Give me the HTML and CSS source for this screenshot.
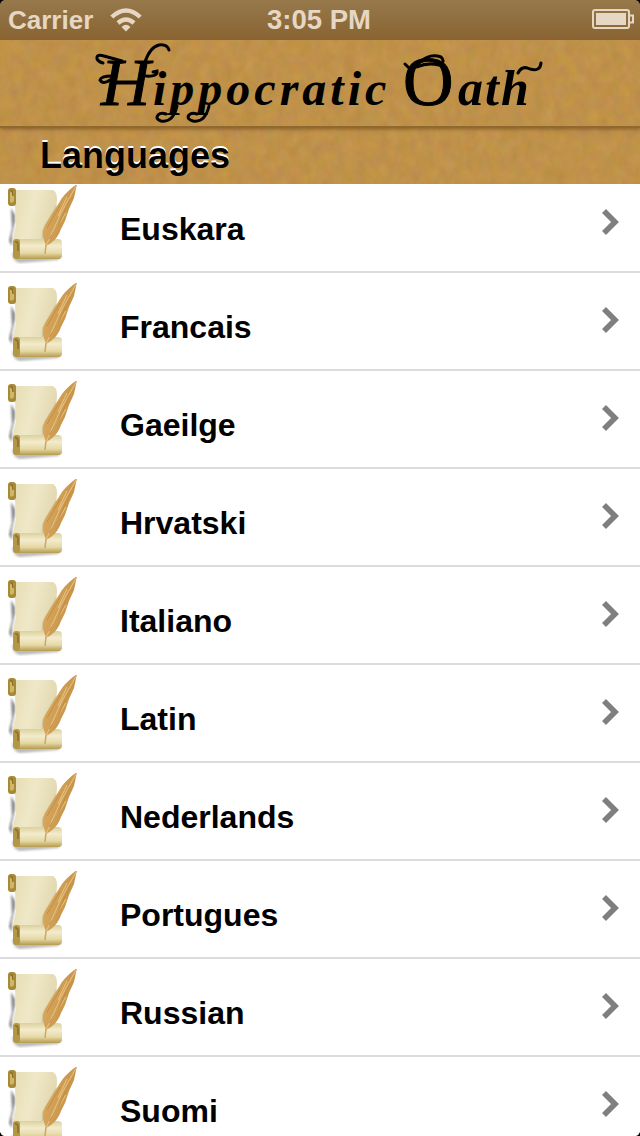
FILE: index.html
```html
<!DOCTYPE html>
<html lang="en">
<head>
  <meta charset="UTF-8">
  <meta name="viewport" content="width=device-width, initial-scale=1.0">
  <title>Hippocratic Oath</title>
  <link rel="stylesheet" href="styles.css">
</head>
<body>
  <!-- shared icons -->
  <svg class="defs" width="0" height="0">
    <defs>
      <linearGradient id="paper" x1="0" x2="1" y1="0" y2="0.3">
        <stop offset="0" stop-color="#e6dcb2"/>
        <stop offset="0.5" stop-color="#efe8c8"/>
        <stop offset="1" stop-color="#e2d8b0"/>
      </linearGradient>
      <linearGradient id="roll" x1="0" x2="0" y1="0" y2="1">
        <stop offset="0" stop-color="#ddd09a"/>
        <stop offset="0.35" stop-color="#f3ecce"/>
        <stop offset="0.7" stop-color="#e5d9a4"/>
        <stop offset="1" stop-color="#b59b50"/>
      </linearGradient>
      <linearGradient id="feather" x1="0" x2="1" y1="0" y2="0.5">
        <stop offset="0" stop-color="#dcb26c"/>
        <stop offset="0.5" stop-color="#d2a055"/>
        <stop offset="1" stop-color="#c08c40"/>
      </linearGradient>
      <filter id="soft"><feGaussianBlur stdDeviation="1.3"/></filter>
      <filter id="grain" x="0" y="0" width="100%" height="100%" color-interpolation-filters="sRGB">
        <feTurbulence type="fractalNoise" baseFrequency="0.09 0.07" numOctaves="4" seed="8"/>
        <feColorMatrix values="0.08 0 0 0 0.71  0.04 0.06 0 0 0.52  0 0 0.1 0 0.24  0 0 0 0 1"/>
      </filter>
      <symbol id="scroll" viewBox="0 0 80 84">
        <path d="M11 23L15 30L15 36L12 50L12 61L9 56L12 43Z" fill="#68676b" opacity=".8" filter="url(#soft)"/>
        <path d="M12 68Q13 77 20 78L58 75L62 71Z" fill="#777" opacity=".5" filter="url(#soft)"/>
        <path d="M14 5L53 5Q57 7 57 14L56 32L51 62L15 62L13 53L16 40L15 22Z" fill="url(#paper)"/>
        <path d="M56 20L42 45L41 60L51 60Z" fill="#c5bb91" opacity=".5"/>
        <rect x="8" y="3" width="8" height="18" rx="3" fill="#a88936"/>
        <path d="M10 6Q14 5 14 10L14 16Q12 19 10 17Z" fill="#cdb76b"/>
        <path d="M10 6Q13 5 13 11" fill="none" stroke="#8a6d28" stroke-width="1.5"/>
        <rect x="15" y="54" width="47" height="20" rx="4" fill="url(#roll)"/>
        <rect x="13" y="54" width="7" height="20" rx="3" fill="#b39745"/>
        <path d="M15 57Q18 56 18 61V66" fill="none" stroke="#8c6d2a" stroke-width="1.5"/>
        <path d="M77 -1C73 2 66 7 62 13L45 40Q42 46 43 52L46 61L51 58Q58 53 61 44L65 36L69 24L74 13Z" fill="url(#feather)"/>
        <path d="M76 1L61 28L46 61M67 12L58 31M66 28L52 50" fill="none" stroke="#e3bd7c" stroke-width="1.200"/>
        <path d="M70 14L58 41L49 54M60 20L47 43" fill="none" stroke="#c08e45" stroke-width="1"/>
        <path d="M46 60L45 69" stroke="#cba768" stroke-width="1.500"/>
      </symbol>
      <symbol id="chevron" viewBox="0 0 18 26">
        <path d="M2 2L13 13L2 24" fill="none" stroke="#7f7f7f" stroke-width="5.600"/>
      </symbol>
    </defs>
  </svg>

  <div class="phone">
    <div class="status-bar">
      <div class="carrier">
        <span>Carrier</span>
        <svg class="wifi" width="32" height="24" viewBox="0 0 32 24">
          <path d="M1.800 9Q16 -4 30.200 9M8 15Q16 8 24 15" fill="none" stroke="#e5d7c4" stroke-width="4.400"/>
          <path d="M11.500 19Q16 14.500 20.500 19L16 23.500Z" fill="#e5d7c4"/>
        </svg>
      </div>
      <span class="time">3:05 PM</span>
      <svg class="battery" width="42" height="21" viewBox="0 0 42 21">
        <rect x="1" y="1" width="36" height="18" rx="2" fill="none" stroke="#e5d7c4" stroke-width="2"/>
        <rect x="4" y="4" width="30" height="12" fill="#e5d7c4"/>
        <path d="M38 6.500H41V13.500H38" fill="none" stroke="#e5d7c4" stroke-width="2"/>
      </svg>
    </div>

    <div class="header">
      <svg class="texture" width="640" height="144"><rect width="640" height="144" filter="url(#grain)"/></svg>
      <div class="title-bar">
        <svg class="title" width="640" height="86" viewBox="0 0 640 86">
          <text y="65"><tspan class="cap" x="101">H</tspan><tspan class="run" x="153">ippocratic</tspan> <tspan class="cap round" x="403">O</tspan><tspan class="end" x="458">ath</tspan></text>
          <!-- pen flourishes around the letters -->
          <g class="flourish">
            <path d="M103 23Q96 21 97 17Q98 14 104 16L122 21M112 36Q101 36 100 40Q103 45 110 40M146 36Q158 37 157 31L153 32M145 22Q150 7 159 5Q167 4 169 10"/>
            <path d="M177 66Q173 83 161 81Q155 79 158 75Q161 72 166 74M209 66Q205 83 193 81Q186 79 189 75Q192 72 197 74"/>
            <path d="M405 24L409 28Q417 27 420 22Q430 13 441 17Q446 22 439 25Q428 22 417 27M518 33Q522 25 530 29Q540 32 541 23"/>
          </g>
        </svg>
      </div>
      <h1 class="section-title">Languages</h1>
    </div>

    <div class="list">
      <ul class="languages">
        <li><svg class="scroll"><use href="#scroll"/></svg><span>Euskara</span><svg class="chevron"><use href="#chevron"/></svg></li>
        <li><svg class="scroll"><use href="#scroll"/></svg><span>Francais</span><svg class="chevron"><use href="#chevron"/></svg></li>
        <li><svg class="scroll"><use href="#scroll"/></svg><span>Gaeilge</span><svg class="chevron"><use href="#chevron"/></svg></li>
        <li><svg class="scroll"><use href="#scroll"/></svg><span>Hrvatski</span><svg class="chevron"><use href="#chevron"/></svg></li>
        <li><svg class="scroll"><use href="#scroll"/></svg><span>Italiano</span><svg class="chevron"><use href="#chevron"/></svg></li>
        <li><svg class="scroll"><use href="#scroll"/></svg><span>Latin</span><svg class="chevron"><use href="#chevron"/></svg></li>
        <li><svg class="scroll"><use href="#scroll"/></svg><span>Nederlands</span><svg class="chevron"><use href="#chevron"/></svg></li>
        <li><svg class="scroll"><use href="#scroll"/></svg><span>Portugues</span><svg class="chevron"><use href="#chevron"/></svg></li>
        <li><svg class="scroll"><use href="#scroll"/></svg><span>Russian</span><svg class="chevron"><use href="#chevron"/></svg></li>
        <li><svg class="scroll"><use href="#scroll"/></svg><span>Suomi</span><svg class="chevron"><use href="#chevron"/></svg></li>
      </ul>
    </div>

    <!-- rounded screen corners -->
    <svg class="corners" width="640" height="1136" viewBox="0 0 640 1136">
      <path d="M0 0H4Q1 1 0 4ZM640 0H636Q639 1 640 4ZM0 1136H4Q1 1135 0 1132ZM640 1136H636Q639 1135 640 1132Z"/>
    </svg>
  </div>
</body>
</html>
```
FILE: styles.css
```css
body {
    margin: 0;
    font-family: "Liberation Sans", Arial, sans-serif;
    font-weight: bold;
    background-color: #ffffff;
    overflow: hidden;
}

.defs {
    position: absolute;
}

.phone {
    position: relative;
    display: flex;
    flex-direction: column;
    width: 640px;
    height: 1136px;
    overflow: hidden;
}

.status-bar {
    display: grid;
    grid-template-columns: 1fr auto 1fr;
    align-items: center;
    height: 40px;
    padding: 0 6px 0 8px;
    box-sizing: border-box;
    flex-shrink: 0;
    color: #e5d7c4;
    background: linear-gradient(#97794c, #8f6e3e 50%, #8a6332);
    font-size: 27.5px;
    line-height: 40px;
}

.time {
    margin-right: 4px;
}

.carrier {
    display: flex;
    align-items: center;
    gap: 17px;
    font-size: 26px;
}

.battery {
    justify-self: end;
    margin-top: -1px;
}

.header {
    position: relative;
    height: 144px;
    flex-shrink: 0;
    overflow: hidden;
    background-color: #be9048;
}

.texture {
    position: absolute;
    top: 0;
    left: 0;
}

.title-bar {
    position: relative;
    height: 86px;
    border-bottom: 2px solid #91692f;
    box-shadow: 0 1px 4px rgba(90, 55, 15, 0.6);
}

.title {
    display: block;
    font-family: "Liberation Serif", "Times New Roman", serif;
    font-style: italic;
    font-weight: bold;
}

.cap {
    font-size: 68px;
    font-weight: normal;
    stroke: #000000;
    stroke-width: 1px;
}

.round {
    font-size: 70px;
    font-style: normal;
}

.run {
    font-size: 48px;
    letter-spacing: 4px;
}

.end {
    font-size: 50px;
    letter-spacing: 2px;
}

.flourish {
    fill: none;
    stroke: #000000;
    stroke-width: 3px;
    stroke-linecap: round;
}

.section-title {
    position: relative;
    margin: 0;
    padding: 1px 0 0 40px;
    font-size: 36px;
    line-height: 54px;
    color: #000000;
    text-shadow: 0 -2px 0 #ffffff;
}

.list {
    flex: 1;
    min-height: 0;
    overflow: hidden;
}

/* list is scrolled a little under the section header */
.languages {
    list-style: none;
    margin: -9px 0 0;
    padding: 0;
}

.languages li {
    display: flex;
    align-items: flex-start;
    height: 98px;
    box-sizing: border-box;
    border-bottom: 2px solid #dcdce0;
    font-size: 32px;
}

.scroll {
    width: 80px;
    height: 84px;
    margin-top: 10px;
}

.languages span {
    flex: 1;
    margin-left: 40px;
    padding-top: 36px;
    line-height: 36px;
}

.chevron {
    width: 18px;
    height: 26px;
    margin: 34px 20px 0 0;
}

.corners {
    position: absolute;
    top: 0;
    left: 0;
    pointer-events: none;
}
```
